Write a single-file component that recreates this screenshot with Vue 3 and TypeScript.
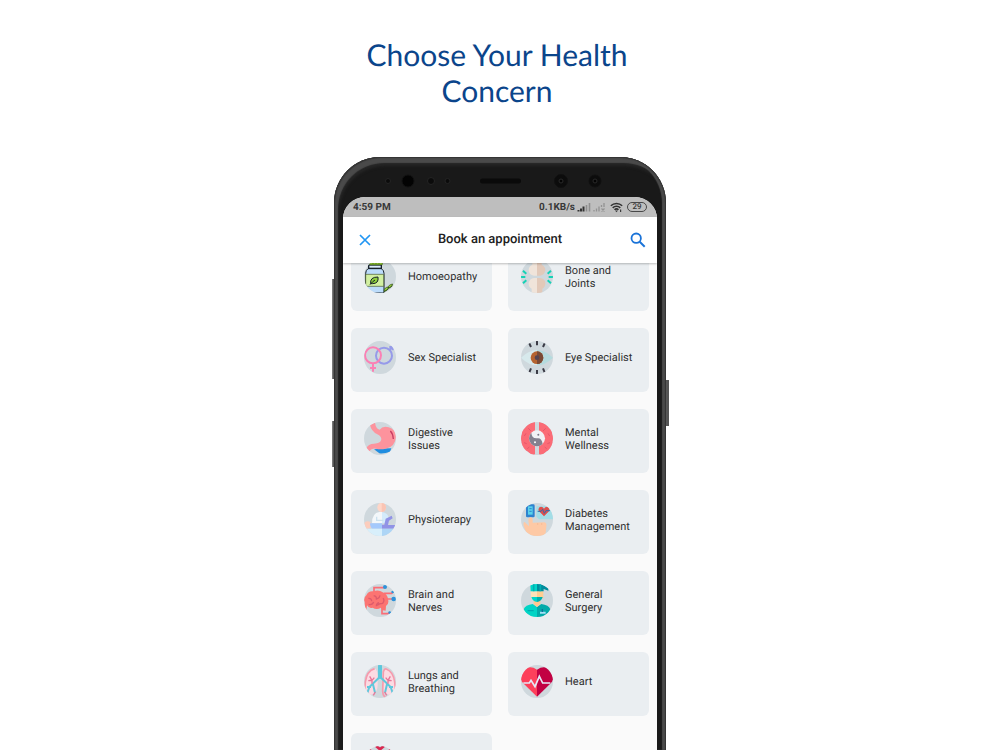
<script setup lang="ts">
interface Concern {
  icon: string
  label?: string
}

const concerns: Concern[] = [
  { icon: 'jar', label: 'Homoeopathy' },
  { icon: 'bone', label: 'Bone and Joints' },
  { icon: 'gender', label: 'Sex Specialist' },
  { icon: 'eye', label: 'Eye Specialist' },
  { icon: 'stomach', label: 'Digestive Issues' },
  { icon: 'mind', label: 'Mental Wellness' },
  { icon: 'physio', label: 'Physioterapy' },
  { icon: 'diabetes', label: 'Diabetes Management' },
  { icon: 'brain', label: 'Brain and Nerves' },
  { icon: 'surgeon', label: 'General Surgery' },
  { icon: 'lungs', label: 'Lungs and Breathing' },
  { icon: 'heart', label: 'Heart' },
  { icon: 'kidney' },
]
</script>

<template>
  <main class="page">
    <h1 class="headline">Choose Your Health Concern</h1>

    <div class="phone">
      <span class="key key-volume"></span>
      <span class="key key-assist"></span>
      <span class="key key-power"></span>

      <div class="shell">
        <svg class="sensors" viewBox="0 0 314 40" aria-hidden="true">
          <g fill="#0b0b0b" stroke="#242424" stroke-width="1">
            <circle cx="45" cy="24" r="2.5" />
            <circle cx="65" cy="24" r="6" fill="#030303" stroke="#111" />
            <circle cx="88" cy="24" r="3.5" />
            <circle cx="104.500" cy="24" r="2.5" />
            <rect x="137" y="21.500" width="41" height="5" rx="2.5" fill="#0a0a0a" stroke="none" />
            <circle cx="218" cy="24" r="6.5" fill="#0c0c0c" stroke="#101010" />
            <circle cx="252" cy="24" r="6" fill="#0c0c0c" stroke="#101010" />
          </g>
          <g fill="#030303" stroke="#2a2a2a" stroke-width="1">
            <circle cx="218" cy="24" r="2" />
            <circle cx="252" cy="24" r="2" />
          </g>
        </svg>

        <div class="screen">
          <div class="status">
            <span>4:59 PM</span>
            <div class="status-right">
              <span>0.1KB/s</span>
              <svg width="14" height="10" viewBox="0 0 14 10" aria-hidden="true">
                <path d="M1.500 9.500V8M4 9.500V6.500M6.500 9.500V4.500" stroke="#333" stroke-width="2" />
                <path d="M9.500 9.500V3M12.500 9.500V1" stroke="#8e8e8e" stroke-width="1.600" />
              </svg>
              <svg width="13" height="10" viewBox="0 0 13 10" aria-hidden="true">
                <path d="M1 9.500V8M3.500 9.500V6.500M6 9.500V4.500M8.500 5V3M11 5V1M8.500 6.500l3 3M11.500 6.500l-3 3" stroke="#929292" stroke-width="1.300" fill="none" />
              </svg>
              <svg class="wifi" width="13" height="11" viewBox="0 0 13 11" aria-hidden="true">
                <path d="M.8 3.800a8.200 8.200 0 0 1 11.400 0M2.700 5.900a5.400 5.400 0 0 1 7.600 0M4.500 7.800a2.900 2.900 0 0 1 4 0" fill="none" stroke="#333" stroke-width="1.500" />
                <path d="M5 8.500h3L6.500 10.200zM10 7.500h1.200V10H10z" fill="#3b3b3b" />
              </svg>
              <span class="battery">29</span>
            </div>
          </div>

          <header class="bar">
            <button class="icon-button close" type="button" aria-label="Close">
              <svg width="12" height="12" viewBox="0 0 12 12"><path d="M1 1l10 10M11 1L1 11" stroke="#2196f3" stroke-width="1.700" /></svg>
            </button>
            <h2>Book an appointment</h2>
            <button class="icon-button search" type="button" aria-label="Search">
              <svg width="16" height="16" viewBox="0 0 16 16" fill="none" stroke="#1a73d8">
                <circle cx="6.200" cy="6.200" r="4.700" stroke-width="1.800" />
                <path d="M9.700 9.700l5 5" stroke-width="2" />
              </svg>
            </button>
          </header>

          <div class="list">
            <div class="grid">
              <button v-for="c in concerns" :key="c.icon" class="card" type="button">
                <svg class="picture" viewBox="0 0 96 99" aria-hidden="true">
                  <rect width="96" height="99" fill="#cfd8dd" />

                  <g v-if="c.icon === 'jar'">
                    <path d="M12 26h40q8 5 8 14v59H5V40q0-9 7-14z" fill="#bcdcfb" stroke="#17202a" stroke-width="3" />
                    <rect x="14" y="15" width="38" height="10" fill="#dcecff" stroke="#17202a" stroke-width="4" />
                    <path d="M17 0h38v14H17z" fill="#a4dc3a" stroke="#4d7c19" stroke-width="2" />
                    <path d="M27 5v6M36 5v6M45 5v6" stroke="#4d7c19" stroke-width="3" />
                    <path d="M5 43h54v36H5z" fill="#d2f0a2" stroke="#45542c" stroke-width="2" />
                    <path d="M20 71q-3-20 22-20 3 20-17 20zM18 74q8-10 15-14" fill="#8ed13c" stroke="#17202a" stroke-width="3" />
                    <path d="M56 99l30-22M60 94q1-13 14-13-2 12-14 13zM72 84q1-10 14-12-2 11-14 12z" fill="#9bd63f" stroke="#2b4712" stroke-width="2" />
                  </g>

                  <g v-else-if="c.icon === 'bone'">
                    <path d="M34 0h14v47h-9q-15-2-16-16 0-12 11-17zM48 54v45H32V86q-10-5-9-17 3-14 16-15z" fill="#f0e4da" />
                    <path d="M48 0h14v14q11 5 11 17-2 14-16 16h-9zM48 54h9q15 2 16 15 0 12-9 17v13H48z" fill="#e2c9b9" />
                    <path d="M6 32l10 9M0 51h13M6 70l10-9M90 32l-10 9M96 51H83M90 70l-10-9" stroke="#16d2b6" stroke-width="6" />
                  </g>

                  <g v-else-if="c.icon === 'gender'" fill="none" stroke-width="6">
                    <circle cx="60" cy="44" r="24" stroke="#969ae9" />
                    <path d="M76 27l9-9M76 18h10v10" stroke="#969ae9" />
                    <circle cx="27" cy="43" r="24" stroke="#fb80b4" />
                    <path d="M27 67v25M18 81h18" stroke="#fb80b4" />
                  </g>

                  <g v-else-if="c.icon === 'eye'">
                    <path d="M0 50Q24 27 48 27v46Q24 73 0 50z" fill="#d7e9ec" />
                    <path d="M96 50Q72 27 48 27v46q24 0 48-23z" fill="#b5dbde" />
                    <circle cx="48" cy="50" r="19" fill="#b56330" />
                    <path d="M48 31a19 19 0 0 1 0 38z" fill="#7a4a35" />
                    <circle cx="48" cy="50" r="7" fill="#554551" />
                    <path d="M25 7l5 11M48 0v13M71 7l-5 11M30 82l-5 12M48 87v12M66 82l5 12" stroke="#3a3a45" stroke-width="6" />
                  </g>

                  <g v-else-if="c.icon === 'stomach'">
                    <path d="M30 82q26-3 52-3l-4 10q-14 6-32 5z" fill="#208de0" />
                    <path d="M18 9L33 2q3 19 14 21Q56 11 74 16q20 6 22 28-2 30-31 36-16 4-29 0-13-3-20 8L5 81q8-16 25-16 20 0 22-13 0-9-12-15Q22 28 18 9z" fill="#fd939d" />
                    <path d="M79 27q8 8 9 24" fill="none" stroke="#c73b63" stroke-width="4" />
                  </g>

                  <g v-else-if="c.icon === 'mind'">
                    <path d="M42 0v97Q30 101 18 87 7 86 6 76q-8-6-5-18-4-11 1-21-1-14 9-18Q22 1 42 0zM54 0v97q12 4 24-10 11-1 12-11 8-6 5-18 4-11-1-21 1-14-9-18Q74 1 54 0z" fill="#fb6b76" />
                    <path d="M22 19l8 8M15 34l-5 8M9 62l8 3M25 75l-6 5M74 19l-8 8M81 34l5 8M87 62l-8 3M71 75l6 5" fill="none" stroke="#e6576a" stroke-width="3" />
                    <circle cx="48" cy="49" r="24" fill="#f2f1f5" />
                    <path d="M31 32A24 24 0 1 0 65 66Q62 46 48 49 32 50 31 32z" fill="#85808f" />
                    <circle cx="52" cy="38" r="3" fill="#7c7787" />
                    <circle cx="42" cy="61" r="3" fill="#fff" />
                  </g>

                  <g v-else-if="c.icon === 'physio'">
                    <path d="M24 61q0-31 22-34h8v34z" fill="#f3f7fa" />
                    <path d="M54 27q18 2 21 20l-2 14H54z" fill="#d4ebfb" />
                    <path d="M38 41v11h20" fill="none" stroke="#cbe1ee" stroke-width="4" />
                    <ellipse cx="53" cy="13" rx="13" ry="14" fill="#ffd6c8" />
                    <path d="M53-1a13 14 0 0 1 0 28z" fill="#fac4b4" />
                    <circle cx="11" cy="66" r="11" fill="#fccdbd" />
                    <path d="M18 61h36v16H25q-7-4-7-16z" fill="#a4c9fc" />
                    <path d="M54 65h7l4-18 18-9 3 8-11 7-3 13h24v11H54z" fill="#9193e6" />
                    <path d="M6 77h48v22H6z" fill="#d8effb" />
                    <path d="M54 77h42v22H54z" fill="#add5f6" />
                  </g>

                  <g v-else-if="c.icon === 'diabetes'">
                    <path d="M46 10h50v39H54l-8-8z" fill="#a2dde6" />
                    <rect x="15" y="4" width="26" height="39" rx="4" fill="#2e83cf" />
                    <rect x="21" y="10" width="14" height="25" fill="#59d2eb" />
                    <path d="M25 17h7M25 25h7" stroke="#2e83cf" stroke-width="3" />
                    <path d="M69 40L54 25q-5-12 6-14 6 0 9 6 3-6 9-6 11 2 6 14z" fill="#dd4f4d" />
                    <path d="M50 25h10l5-6 5 12 5-8h12" fill="none" stroke="#326dad" stroke-width="3" />
                    <path d="M22 49q2-7 8-6 5 1 5 8v8l35-1q8 1 6 13l-3 28H19L8 68q-2-10 3-11l13 13z" fill="#fec9a5" />
                    <path d="M50 60v6M62 60v6" stroke="#f2b58f" stroke-width="2" />
                  </g>

                  <g v-else-if="c.icon === 'brain'">
                    <path d="M30 26V11h31M60 28h23l4-4M66 45h23M54 67v22h18l5-4" fill="none" stroke="#fb6d76" stroke-width="5" />
                    <path d="M2 54q-5-12 5-20 6-14 22-12 15-6 27 3 14 4 16 21 4 14-6 20l-1 14-9-1-5-8q-13 8-25 0-11 4-17-7l-2 15-5-5z" fill="#fc7472" />
                    <path d="M13 43q10-1 10 9M29 35q10 2 8 12M48 34q-2 10-13 11M57 43q6 6-1 15-11 0-16 6M14 61q11 3 15-7M37 67q0-9 8-11" fill="none" stroke="#dd5b6b" stroke-width="4" />
                    <g fill="#2d92da"><circle cx="63" cy="9" r="6" /><circle cx="89" cy="45" r="7" /><circle cx="86" cy="24" r="4" /><circle cx="77" cy="86" r="4" /></g>
                  </g>

                  <g v-else-if="c.icon === 'surgeon'">
                    <path d="M8 76q5-13 27-16l13 9v30H20z" fill="#00d4c5" />
                    <path d="M88 76q-5-13-27-16l-13 9v30h28z" fill="#02aaa9" />
                    <path d="M38 48h20v12L48 69 38 60z" fill="#ffc891" />
                    <path d="M29 22h19v21H30z" fill="#ffe1b9" />
                    <path d="M48 22h19v21H48z" fill="#ffce91" />
                    <path d="M31 39h17v15q-13-1-17-15z" fill="#00d7ca" />
                    <path d="M48 39h17q-4 14-17 15z" fill="#00b0af" />
                    <path d="M28 4q9-6 20-5v23H29z" fill="#00d5c7" />
                    <path d="M48-1q12-1 19 5l15 8v8l-14-5v7H48z" fill="#008d9d" />
                    <path d="M38 0v22M58 0v22" stroke="#00aeb3" stroke-width="5" />
                    <path d="M20 80h18" stroke="#00aab0" stroke-width="4" />
                    <path d="M57 86h17" stroke="#a5def5" stroke-width="6" />
                    <path d="M64 75v9" stroke="#126b9c" stroke-width="4" />
                  </g>

                  <g v-else-if="c.icon === 'lungs'">
                    <path d="M31 9Q7 17 3 50L0 91q22 4 37-13 5-7 4-33Q42 13 31 9zM65 9q24 8 28 41l3 41q-22 4-37-13-5-7-4-33Q54 13 65 9z" fill="#fbdbe3" />
                    <path d="M32 11Q8 18 4 51L1 90M64 96q-7-3-8-17l2-58q3-11 9-9 21 8 25 39l4 41" fill="none" stroke="#f59bad" stroke-width="5" />
                    <path d="M48 35L16 66 10 84M48 35l32 31 6 18M27 58l6 25M69 58l-6 25M21 66H9M75 66h12" fill="none" stroke="#5ec8dc" stroke-width="6" />
                    <path d="M48 0v41" stroke="#5ec8dc" stroke-width="12" />
                    <path d="M17 34l7 12 7-8M13 47l11-1v10M79 34l-7 12-7-8M83 47l-11-1v10M28 91l6-10M68 91l-6-10" fill="none" stroke="#e8779a" stroke-width="4" />
                  </g>

                  <g v-else-if="c.icon === 'heart'">
                    <path d="M48 95L6 54Q-7 37 4 20 23-3 48 14z" fill="#fd405b" />
                    <path d="M48 95l42-41q13-17 2-34Q73-3 48 14z" fill="#c20143" />
                    <path d="M7 54h18l5-8 12 19L55 34l10 20h23" fill="none" stroke="#e4e9f6" stroke-width="5" />
                  </g>

                  <g v-else>
                    <path d="M36 0l12 10L60 0M48 8v30M20 10l-4 6M76 10l4 6" fill="none" stroke="#d92850" stroke-width="8" />
                    <path d="M38 18q-30-7-31 26l31 8zM58 18q30-7 31 26l-31 8z" fill="#e23b5b" />
                  </g>
                </svg>
                <span v-if="c.label" class="label">{{ c.label }}</span>
              </button>
            </div>
          </div>
        </div>
      </div>
    </div>
  </main>
</template>

<style>
body {
  margin: 0;
  background: #fff;
}
</style>

<style scoped>
.page {
  box-sizing: border-box;
  height: 100vh;
  padding-top: 37px;
  overflow: hidden;
  display: flex;
  flex-direction: column;
  align-items: center;
  gap: 48px;
  font-family: Roboto, "Liberation Sans", sans-serif;
  text-rendering: geometricPrecision;
}

.headline {
  margin: 0;
  padding-right: 6px;
  max-width: 320px;
  flex: none;
  color: #0b458b;
  font: 400 30px/36px Lato, sans-serif;
  text-align: center;
}

.phone {
  position: relative;
  flex: 1;
  min-height: 0;
  width: 100%;
  max-width: 332px;
}

.key {
  position: absolute;
  width: 4px;
  background: linear-gradient(90deg, #8a8a8a, #555 40%);
}

.key-volume {
  left: -2px;
  top: 122px;
  height: 100px;
}

.key-assist {
  left: -2px;
  top: 264px;
  height: 46px;
}

.key-power {
  right: -3px;
  top: 223px;
  height: 46px;
}

.shell {
  position: relative;
  box-sizing: border-box;
  height: 100%;
  padding: 0 9px;
  display: flex;
  flex-direction: column;
  border-radius: 46px 46px 0 0;
  background: #191919;
  box-shadow: inset 1px 1px 1px #333, inset -1px 0 1px #333, inset 4px 6px 1px #4a4a4a, inset -4px 0 1px #4a4a4a, inset 5px 9px 3px #262626;
}

.sensors {
  display: block;
  flex: none;
  width: 100%;
  height: 40px;
}

.screen {
  flex: 1;
  min-height: 0;
  display: flex;
  flex-direction: column;
  overflow: hidden;
  border-radius: 22px 22px 0 0;
  background: #fafafa;
}

.status {
  flex: none;
  height: 20px;
  padding: 0 10px;
  display: flex;
  align-items: center;
  justify-content: space-between;
  background: #bebebe;
  color: #383838;
  font-size: 10px;
  font-weight: 700;
}

.status-right {
  display: flex;
  align-items: center;
  gap: 2px;
}

.wifi {
  margin-left: 2px;
}

.battery {
  box-sizing: border-box;
  width: 20px;
  height: 10px;
  margin-left: 2px;
  border: 1px solid #484848;
  border-radius: 5px;
  font-size: 8px;
  line-height: 8px;
  font-weight: 500;
  text-align: center;
}

.bar {
  position: relative;
  z-index: 1;
  flex: none;
  height: 46px;
  padding: 0 5px;
  display: grid;
  grid-template-columns: 1fr auto 1fr;
  align-items: center;
  background: #fff;
  box-shadow: 0 1px 2px rgba(0, 0, 0, 0.25);
}

.bar h2 {
  margin: 0;
  color: #212121;
  font-size: 13px;
  line-height: 18px;
  font-weight: 500;
}

.icon-button {
  width: 28px;
  height: 28px;
  padding: 0;
  display: grid;
  place-items: center;
  border: 0;
  background: none;
}

.close {
  width: 34px;
}

.search {
  justify-self: end;
}

.list {
  flex: 1;
  min-height: 0;
  overflow: hidden;
}

.grid {
  margin-top: -16px;
  padding: 0 8px;
  display: grid;
  grid-template-columns: 1fr 1fr;
  gap: 17px 16px;
}

.card {
  height: 64px;
  padding: 13px 12px 18px 13px;
  display: flex;
  align-items: center;
  gap: 12px;
  border: 0;
  border-radius: 6px;
  background: #eaeef1;
  color: #303030;
  font: 400 11px/13px Roboto, "Liberation Sans", sans-serif;
  text-align: left;
  text-rendering: inherit;
}

.picture {
  flex: none;
  width: 32px;
  height: 33px;
  border-radius: 50%;
}

.label {
  max-width: 72px;
}
</style>
